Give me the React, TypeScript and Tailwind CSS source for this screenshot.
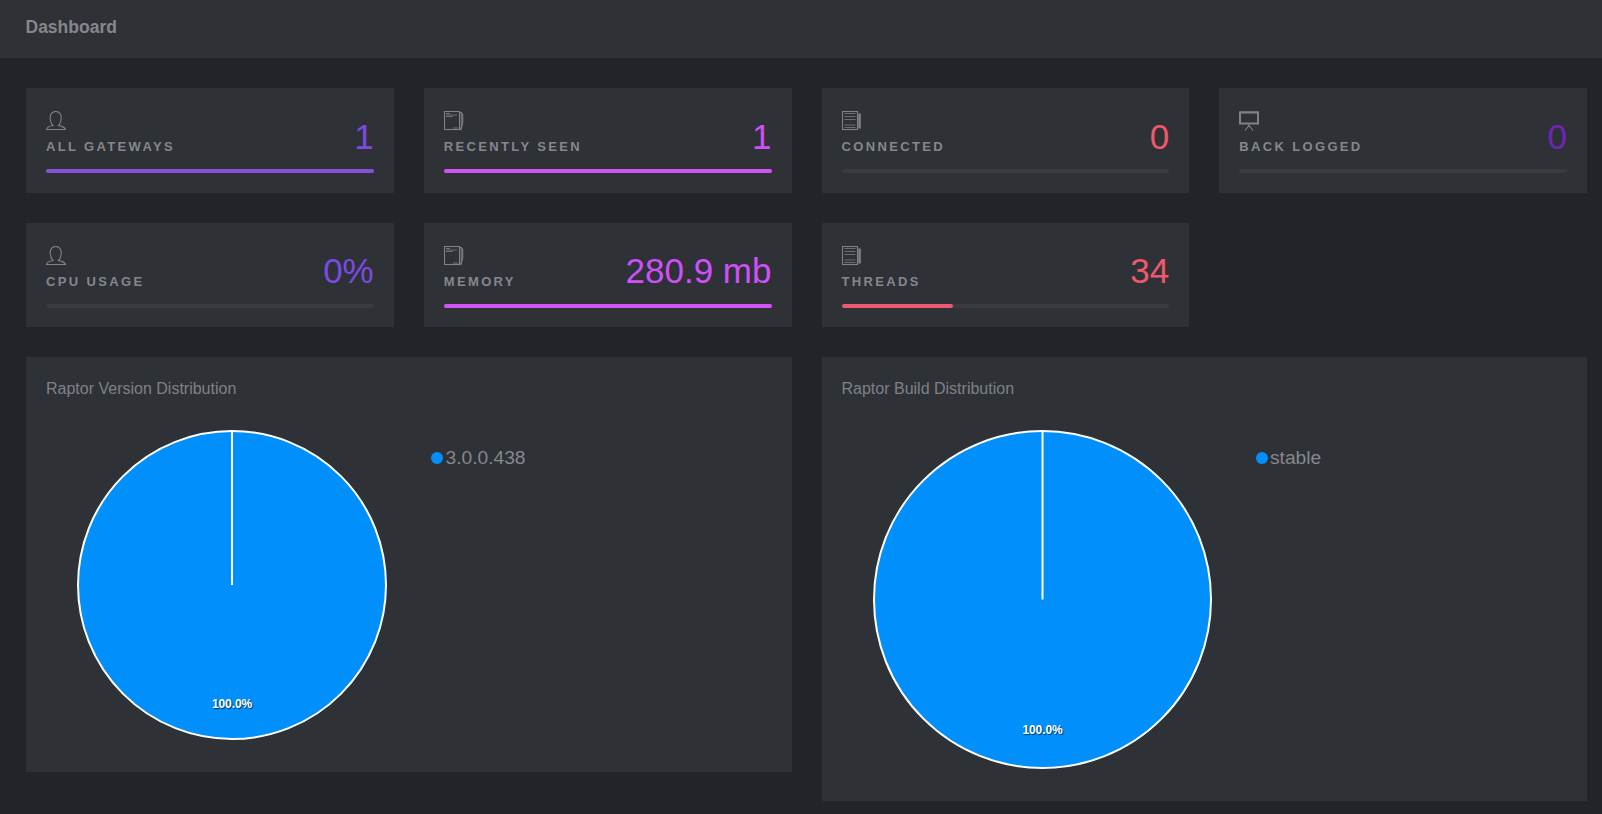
import React from "react";

function PersonIcon() {
  return (
    <svg width="20" height="20" viewBox="0 0 20 20" fill="none" stroke="#808287" strokeWidth="1.1" className="block">
      <path d="M7 14.5C5.5 13 4.2 10 4.2 6.5C4.2 3 6.6 .5 9.7 .5S15.2 3 15.2 6.5C15.2 10 14 13 12.5 14.5C15 15 18.5 15.5 19.5 18.5H.5C1 16 4 15 7 14.5Z" />
    </svg>
  );
}

function NoteIcon() {
  return (
    <svg width="20" height="20" viewBox="0 0 20 20" fill="none" stroke="#808287" strokeWidth="1.1" className="block">
      <rect x=".5" y=".5" width="15" height="18" />
      <path d="M2 2.5H6M2 4H13M2 5.5H9M9 17H14" strokeWidth=".8" />
      <path d="M15.7 1.5H17.2L18.7 3.5V12L17 18.5L15.7 16" />
      <path d="M17.2 1.5V15" strokeWidth="1" />
    </svg>
  );
}

function BookIcon() {
  return (
    <svg width="20" height="20" viewBox="0 0 20 20" fill="none" stroke="#808287" strokeWidth="1.1" className="block">
      <rect x=".5" y=".5" width="15" height="18" />
      <path d="M2.5 2.5H13.5M2.5 5.5H13.5M2.5 8.5H13.5M2.5 14H13.5M2.5 16.5H13.5" strokeWidth="1" stroke="#6c6e73" />
      <path d="M16.3 2.5H18.8V17.5H16.3Z" fill="#808287" stroke="none" />
    </svg>
  );
}

function BoardIcon() {
  return (
    <svg width="20" height="20" viewBox="0 0 20 20" fill="none" stroke="#808287" strokeWidth="1" className="block">
      <path d="M.5 1.2H19.5" strokeWidth="1.6" />
      <rect x="1" y="1.5" width="18" height="11" strokeWidth="2" />
      <path d="M10 13V14.5M10 14.5L6 19.5M10 14.5L14 19.5" strokeWidth="1.1" />
    </svg>
  );
}

type StatProps = {
  icon: React.ReactNode;
  label: string;
  value: string;
  valueClass: string;
  barClass: string;
  barWidth: string;
};

function Stat({ icon, label, value, valueClass, barClass, barWidth }: StatProps) {
  return (
    <div className="h-[104.67px] bg-[#2e3136] px-5 pt-[23px]">
      <div className="flex h-[50px] justify-between">
        <div>
          {icon}
          <div className="mt-[6px] text-[13px] leading-[20px] font-bold tracking-[2.35px] text-[#85878c]">{label}</div>
        </div>
        <div className={`mt-[5.5px] text-[35px] leading-[40px] ${valueClass}`}>{value}</div>
      </div>
      <div className="mt-[8px]">
        <div className="h-1 rounded-full bg-[#393b41]">
          <div className={`h-1 rounded-full ${barClass}`} style={{ width: barWidth }} />
        </div>
      </div>
    </div>
  );
}

function Pie({ r, labelY }: { r: number; labelY: number }) {
  const size = 2 * r + 4;
  const c = size / 2;
  return (
    <svg width={size} height={size} viewBox={`0 0 ${size} ${size}`} className="block shrink-0">
      <circle cx={c} cy={c} r={r} fill="#008ffb" stroke="#ffffff" strokeWidth="2" />
      <line x1={c} y1={c} x2={c} y2={c - r} stroke="#ffffff" strokeWidth="2" />
      <text
        x={c}
        y={c + labelY}
        textAnchor="middle"
        fill="#ffffff"
        fontSize="12"
        fontWeight="700"
        letterSpacing="-0.1"
        className="[text-shadow:1px_1px_1px_#000000a0]"
      >
        100.0%
      </text>
    </svg>
  );
}

function Legend({ label }: { label: string }) {
  return (
    <div className="flex items-center">
      <span className="h-3 w-3 rounded-full bg-[#008ffb]" />
      <span className="ml-[2.5px] text-[19.2px] leading-[24px] text-[#85878c]">{label}</span>
    </div>
  );
}

export default function App() {
  return (
    <div className="min-h-[814px] overflow-hidden bg-[#212429] font-['Liberation_Sans',Arial,sans-serif]">
      <header className="flex h-[58px] items-center bg-[#2e3136] pb-[4px] pl-[25.5px] text-[17.5px] font-bold text-[#85878c]">
        Dashboard
      </header>
      <main className="pt-[30px] pr-[15px] pl-[26px]">
        <div className="grid grid-cols-4 gap-[30px]">
          <Stat icon={<PersonIcon />} label="ALL GATEWAYS" value="1" valueClass="text-[#7a4be0]" barClass="bg-[#8850d8]" barWidth="100%" />
          <Stat icon={<NoteIcon />} label="RECENTLY SEEN" value="1" valueClass="text-[#cf50f8]" barClass="bg-[#cf56f5]" barWidth="100%" />
          <Stat icon={<BookIcon />} label="CONNECTED" value="0" valueClass="text-[#f0586c]" barClass="bg-[#ea5a70]" barWidth="0%" />
          <Stat icon={<BoardIcon />} label="BACK LOGGED" value="0" valueClass="text-[#6f25b8]" barClass="bg-[#6f25b8]" barWidth="0%" />
          <Stat icon={<PersonIcon />} label="CPU USAGE" value="0%" valueClass="text-[#7a4be0]" barClass="bg-[#8850d8]" barWidth="0%" />
          <Stat icon={<NoteIcon />} label="MEMORY" value="280.9 mb" valueClass="text-[#cf50f8]" barClass="bg-[#cf56f5]" barWidth="100%" />
          <Stat icon={<BookIcon />} label="THREADS" value="34" valueClass="text-[#f0586c]" barClass="bg-[#ea5a70]" barWidth="34%" />
        </div>
        <div className="mt-[30px] grid grid-cols-2 items-start gap-x-[30px]">
          <section className="h-[415px] bg-[#2e3136] pt-[21px] pl-5">
            <h2 className="text-base leading-[22px] text-[#7f8186]">Raptor Version Distribution</h2>
            <div className="mt-[29px] flex">
              <div className="ml-[30px]">
                <Pie r={154} labelY={123} />
              </div>
              <div className="mt-[17px] ml-[43px]">
                <Legend label="3.0.0.438" />
              </div>
            </div>
          </section>
          <section className="h-[444px] bg-[#2e3136] pt-[21px] pl-5">
            <h2 className="text-base leading-[22px] text-[#7f8186]">Raptor Build Distribution</h2>
            <div className="mt-[29px] flex">
              <div className="ml-[30px]">
                <Pie r={168.5} labelY={134} />
              </div>
              <div className="mt-[17px] ml-[43px]">
                <Legend label="stable" />
              </div>
            </div>
          </section>
        </div>
      </main>
    </div>
  );
}
